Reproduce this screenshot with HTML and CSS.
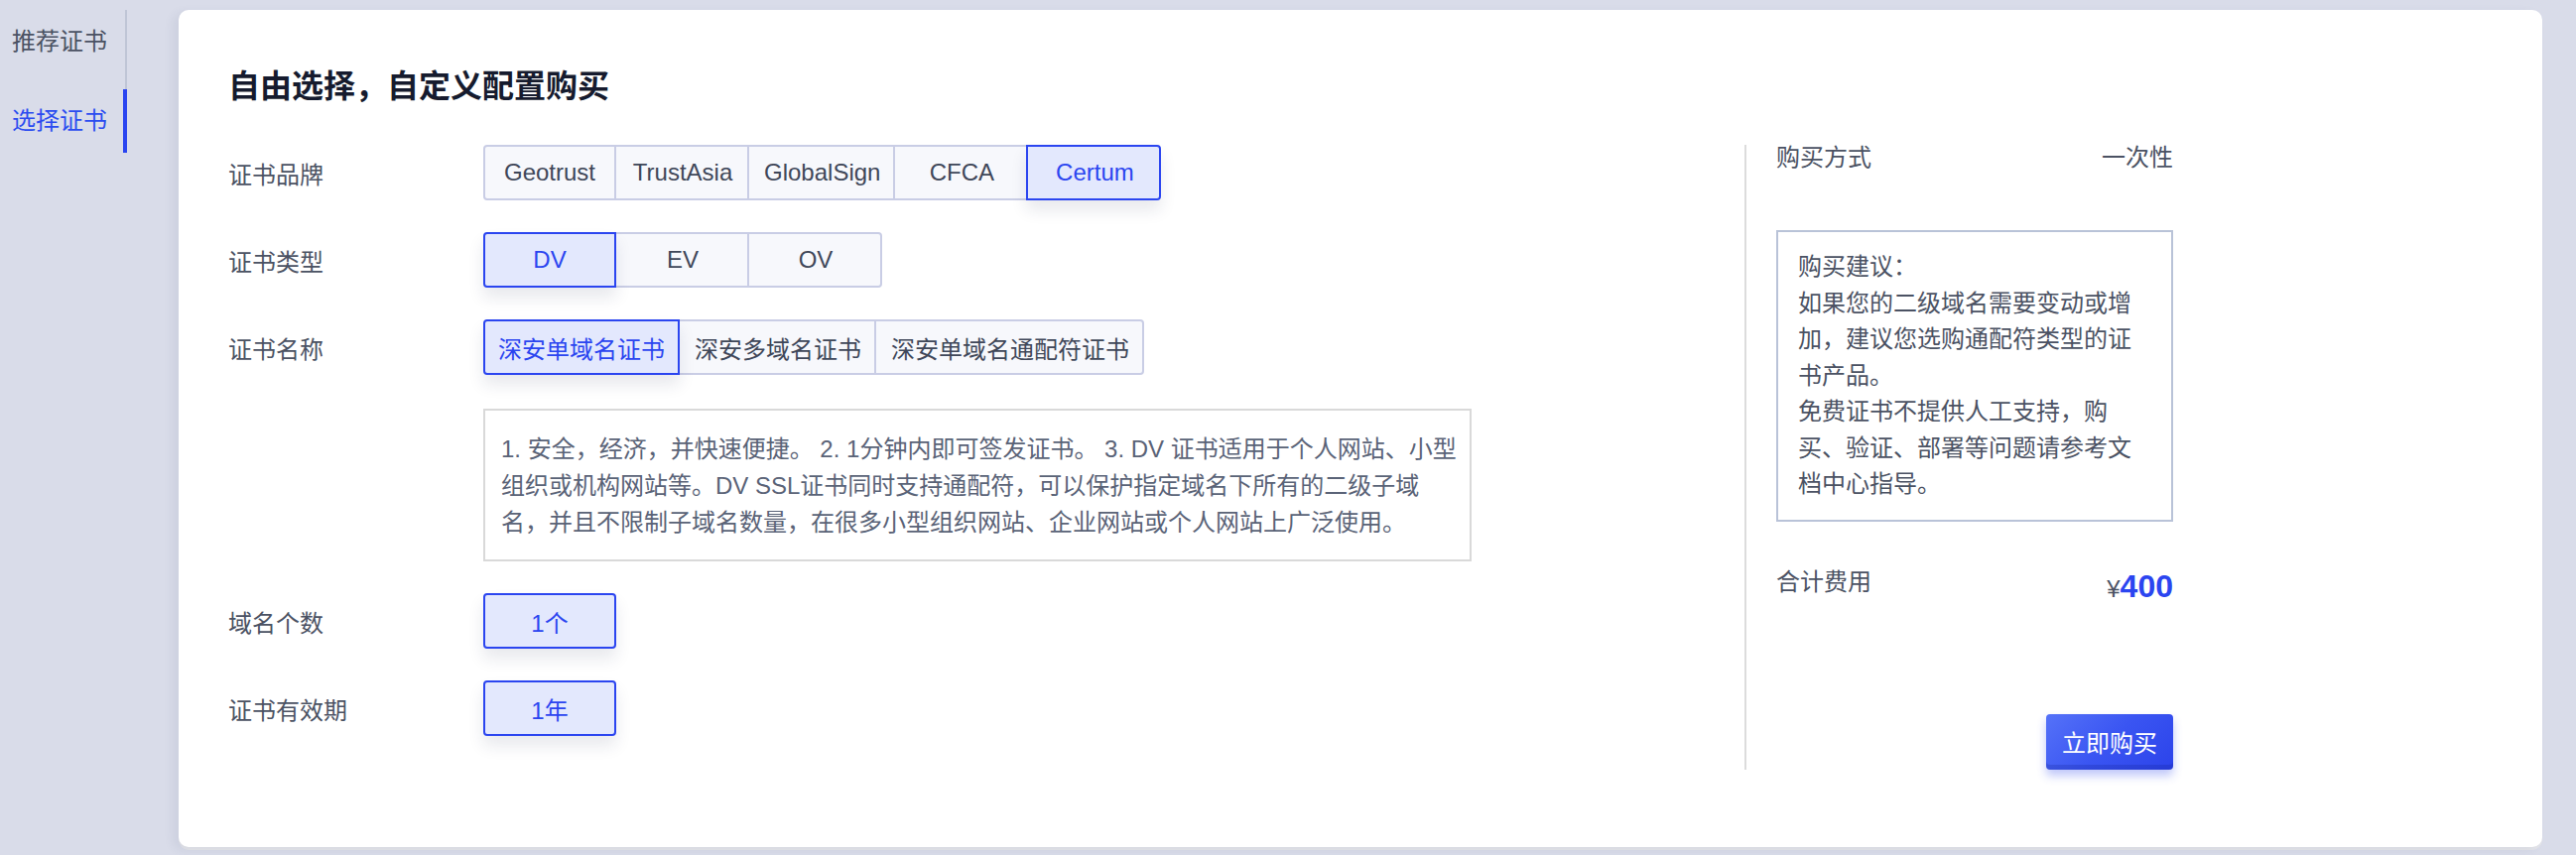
FILE: index.html
```html
<!DOCTYPE html>
<html lang="zh-CN">
<head>
<meta charset="utf-8">
<title>选择证书</title>
<link rel="stylesheet" href="styles.css">
</head>
<body>
<div class="page">
  <aside class="side">
    <ul class="nav">
      <li class="nav-item">推荐证书</li>
      <li class="nav-item active">选择证书</li>
    </ul>
  </aside>
  <main class="card">
    <h1 class="title">自由选择，自定义配置购买</h1>
    <div class="content">
      <div class="form">
        <div class="label">证书品牌</div>
        <div class="group">
          <span class="opt">Geotrust</span>
          <span class="opt">TrustAsia</span>
          <span class="opt">GlobalSign</span>
          <span class="opt">CFCA</span>
          <span class="opt on">Certum</span>
        </div>

        <div class="label">证书类型</div>
        <div class="group">
          <span class="opt on">DV</span>
          <span class="opt">EV</span>
          <span class="opt">OV</span>
        </div>

        <div class="label">证书名称</div>
        <div class="group">
          <span class="opt on">深安单域名证书</span>
          <span class="opt">深安多域名证书</span>
          <span class="opt">深安单域名通配符证书</span>
        </div>

        <div class="label"></div>
        <div class="desc">1. 安全，经济，并快速便捷。 2. 1分钟内即可签发证书。 3. DV 证书适用于个人网站、小型组织或机构网站等。DV SSL证书同时支持通配符，可以保护指定域名下所有的二级子域名，并且不限制子域名数量，在很多小型组织网站、企业网站或个人网站上广泛使用。</div>

        <div class="label">域名个数</div>
        <div class="group">
          <span class="opt on">1个</span>
        </div>

        <div class="label">证书有效期</div>
        <div class="group">
          <span class="opt on">1年</span>
        </div>
      </div>

      <div class="summary">
        <div class="row">
          <span>购买方式</span>
          <span>一次性</span>
        </div>
        <div class="advice">购买建议：<br>如果您的二级域名需要变动或增加，建议您选购通配符类型的证书产品。<br>免费证书不提供人工支持，购买、验证、部署等问题请参考文档中心指导。</div>
        <div class="row total">
          <span class="total-label">合计费用</span>
          <span class="price"><span class="yen">¥</span><span class="num">400</span></span>
        </div>
        <div class="actions">
          <button class="buy" type="button">立即购买</button>
        </div>
      </div>
    </div>
  </main>
</div>
</body>
</html>
```

FILE: styles.css
```css
* {
  box-sizing: border-box;
}

html, body {
  margin: 0;
  padding: 0;
}

body {
  background: #d9dce9;
  font-family: "Liberation Sans", "Noto Sans CJK SC", sans-serif;
  color: #4b5263;
  font-size: 24px;
}

.page {
  display: flex;
  align-items: flex-start;
  width: 2596px;
  height: 862px;
}

/* sidebar */
.side {
  width: 128px;
  flex: none;
  padding-top: 10px;
}

.nav {
  list-style: none;
  margin: 0;
  padding: 0;
  border-right: 2px solid #bfc5d6;
}

.nav-item {
  height: 64px;
  line-height: 64px;
  padding-left: 12px;
  margin-right: -2px;
  font-size: 24px;
  color: #4b5263;
  white-space: nowrap;
}

.nav-item + .nav-item {
  margin-top: 16px;
}

.nav-item.active {
  color: #2b4cf0;
  border-right: 4px solid #2b45f0;
}

/* card */
.card {
  flex: 1;
  margin: 10px 34px 0 52px;
  background: #ffffff;
  border-radius: 10px;
  padding: 55px 0 78px 50px;
  box-shadow: -6px 3px 10px rgba(70, 80, 120, 0.08), 0 3px 0 #e3e4e9;
}

.title {
  margin: 0;
  font-size: 32px;
  line-height: 44px;
  font-weight: 700;
  color: #161b2e;
}

.content {
  display: flex;
  align-items: flex-start;
  margin-top: 37px;
}

/* form */
.form {
  width: 1528px;
  flex: none;
  display: grid;
  grid-template-columns: 257px 1fr;
  row-gap: 32px;
  align-items: center;
}

.label {
  font-size: 24px;
  color: #4b5263;
  white-space: nowrap;
}

.group {
  display: flex;
}

.opt {
  position: relative;
  min-width: 134px;
  height: 56px;
  padding: 0 13px;
  display: flex;
  align-items: center;
  justify-content: center;
  font-size: 24px;
  color: #3f4759;
  background: #f7f8fc;
  border: 2px solid #c9cde5;
  white-space: nowrap;
}

.opt + .opt {
  border-left-width: 0;
  padding-left: 15px;
}

.opt:first-child {
  border-radius: 4px 0 0 4px;
}

.opt:last-child {
  border-radius: 0 4px 4px 0;
}

.opt:only-child {
  border-radius: 4px;
}

.opt.on {
  z-index: 1;
  color: #2b45f0;
  background: #e3e8fd;
  border-color: #2b45f0;
  box-shadow: 0 10px 16px rgba(30, 40, 80, 0.1);
}

.opt + .opt.on {
  border-left-width: 2px;
  padding-left: 15px;
  margin-left: -2px;
  min-width: 136px;
}

.desc {
  width: 996px;
  height: 154px;
  margin-top: 2px;
  border: 2px solid #d9d9d9;
  padding: 20px 8px 18px 16px;
  font-size: 24px;
  line-height: 37px;
  color: #5a6377;
}

/* summary */
.summary {
  width: 432px;
  flex: none;
  border-left: 2px solid #dcdcdc;
  padding-left: 30px;
  padding-top: 1px;
}

.row {
  display: flex;
  justify-content: space-between;
  align-items: flex-start;
  line-height: 24px;
  font-size: 24px;
  color: #4b5263;
}

.advice {
  margin-top: 61px;
  border: 2px solid #b9c3d8;
  padding: 17px 20px;
  font-size: 24px;
  line-height: 36.5px;
  color: #4b5263;
}

.total {
  margin-top: 49px;
}

.total-label {
  line-height: 24px;
}

.price {
  line-height: 32px;
  white-space: nowrap;
}

.yen {
  font-size: 24px;
  color: #4b5263;
}

.num {
  font-size: 32px;
  font-weight: 700;
  color: #2b45f0;
}

.actions {
  display: flex;
  justify-content: flex-end;
  margin-top: 110px;
}

.buy {
  width: 128px;
  height: 56px;
  border: none;
  border-radius: 4px;
  padding: 0;
  font-family: "Liberation Sans", "Noto Sans CJK SC", sans-serif;
  font-size: 24px;
  color: #ffffff;
  background: linear-gradient(135deg, #5572f8 0%, #3a55f2 50%, #2c43ea 100%);
  box-shadow: inset 0 -5px 0 rgba(20, 30, 140, 0.22), 0 6px 10px rgba(44, 70, 240, 0.3);
}
```
